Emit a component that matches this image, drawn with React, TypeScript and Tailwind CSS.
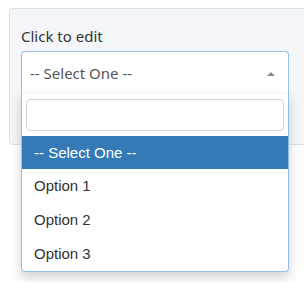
import React from "react";

export default function App() {
  const options = ["Option 1", "Option 2", "Option 3"];
  return (
    <div className="w-[304px] h-[282px] bg-white overflow-hidden pt-[8px] pl-[9px]">
      <div
        className="w-[320px] h-[137px] bg-[#f4f6f9] border border-[#dde1e6] rounded-[4px] pt-[17px] pl-[11px]"
        style={{ fontFamily: '"Noto Sans", "Open Sans", sans-serif' }}
      >
        <div className="text-[15px] leading-[20px] text-[#333] mb-[5px]">Click to edit</div>
        <div className="relative w-[268px]">
          <div className="h-[42px] bg-white border border-b-0 border-[#93c0ea] rounded-t-[4px] flex items-center pl-[8px] pr-[13px]">
            <span className="flex-1 text-[15px] leading-[20px] text-[#555] pt-[1px]">-- Select One --</span>
            <span className="w-0 h-0 border-l-[4px] border-r-[4px] border-b-[4px] border-l-transparent border-r-transparent border-b-[#888] mt-[2px]"></span>
          </div>
          <div
            className="absolute left-0 top-[42px] w-[268px] bg-white border border-t-0 border-[#93c0ea] rounded-b-[4px] shadow-[0_6px_12px_rgba(0,0,0,0.175)] z-10"
            style={{ fontFamily: '"Liberation Sans", Arial, sans-serif' }}
          >
            <div className="px-[4px] pt-[5px] pb-[5px] border-t border-[#f4f4f4]">
              <div className="h-[32px] border border-[#d4d4d4] rounded-[4px] bg-white"></div>
            </div>
            <div className="h-[33px] bg-[#337ab7] text-white text-[15px] leading-[20px] pl-[12px] flex items-center">
              -- Select One --
            </div>
            {options.map((o) => (
              <div key={o} className="h-[34px] text-[#333] text-[15px] leading-[20px] pl-[12px] flex items-center">
                {o}
              </div>
            ))}
          </div>
        </div>
      </div>
    </div>
  );
}
